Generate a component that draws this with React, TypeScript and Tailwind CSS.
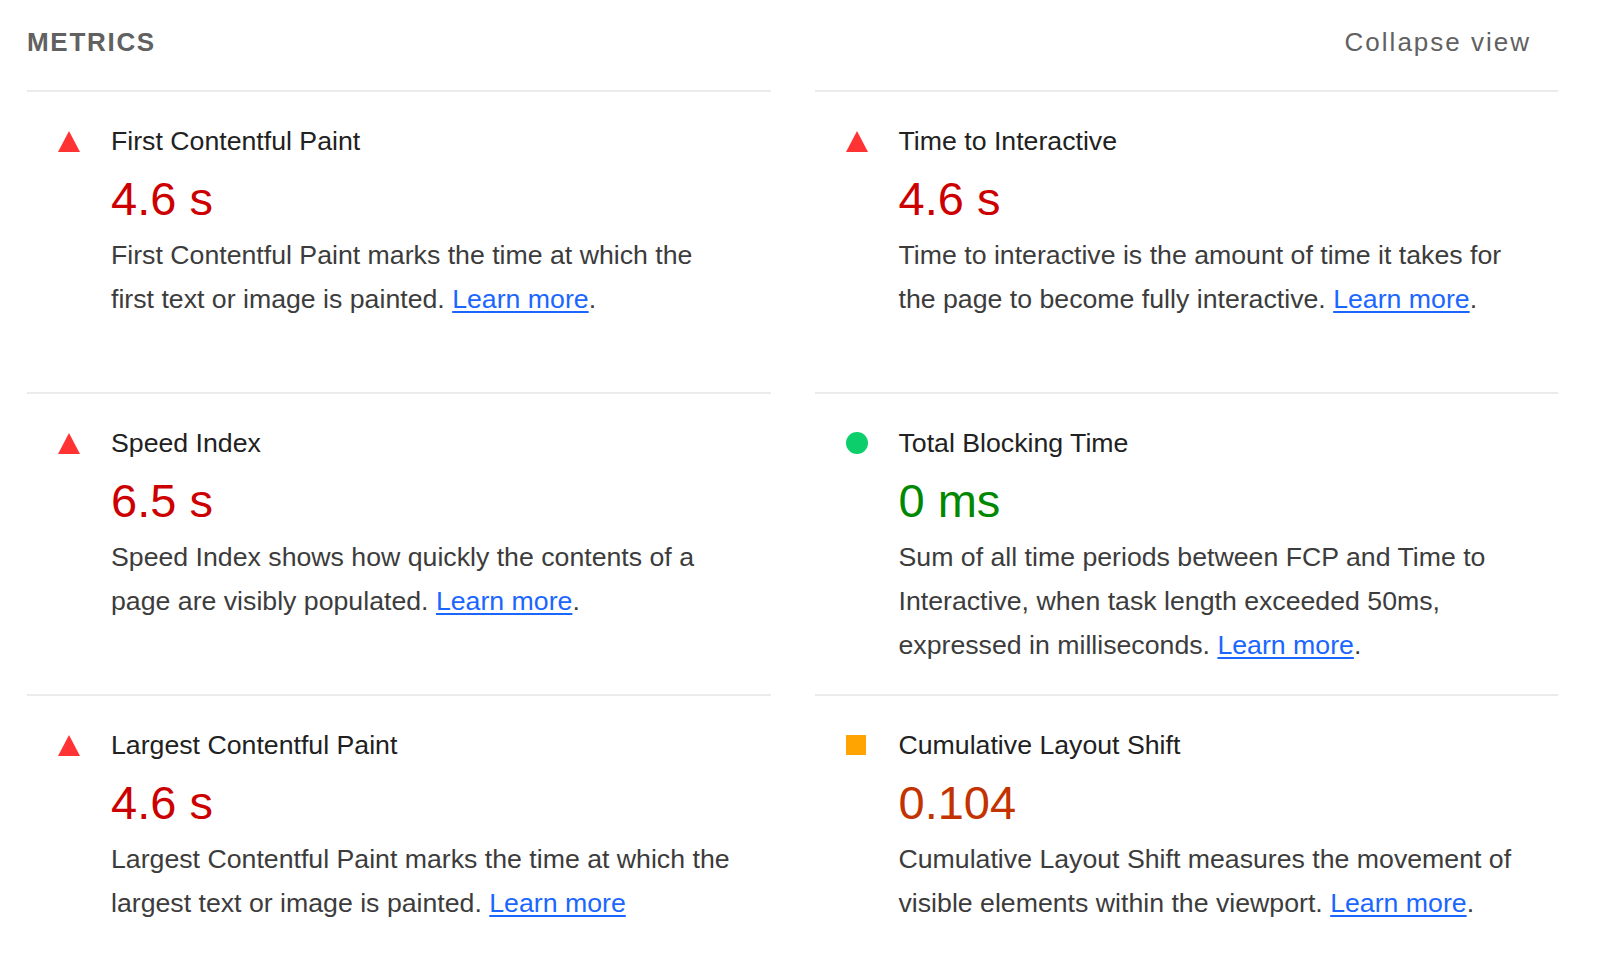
import React from 'react';

type Status = 'fail' | 'pass' | 'average';

interface Metric {
  title: string;
  value: string;
  status: Status;
  description: string;
  period?: boolean;
}

const metrics: Metric[] = [
  {
    title: 'First Contentful Paint',
    value: '4.6 s',
    status: 'fail',
    description: 'First Contentful Paint marks the time at which the first text or image is painted.',
  },
  {
    title: 'Time to Interactive',
    value: '4.6 s',
    status: 'fail',
    description: 'Time to interactive is the amount of time it takes for the page to become fully interactive.',
  },
  {
    title: 'Speed Index',
    value: '6.5 s',
    status: 'fail',
    description: 'Speed Index shows how quickly the contents of a page are visibly populated.',
  },
  {
    title: 'Total Blocking Time',
    value: '0 ms',
    status: 'pass',
    description:
      'Sum of all time periods between FCP and Time to Interactive, when task length exceeded 50ms, expressed in milliseconds.',
  },
  {
    title: 'Largest Contentful Paint',
    value: '4.6 s',
    status: 'fail',
    description: 'Largest Contentful Paint marks the time at which the largest text or image is painted.',
    period: false,
  },
  {
    title: 'Cumulative Layout Shift',
    value: '0.104',
    status: 'average',
    description: 'Cumulative Layout Shift measures the movement of visible elements within the viewport.',
  },
];

const valueColor: Record<Status, string> = {
  fail: 'text-[#cc0000]',
  pass: 'text-[#008800]',
  average: 'text-[#c33300]',
};

const StatusIcon: React.FC<{ status: Status }> = ({ status }) => {
  if (status === 'pass') {
    return <div className="w-[22px] h-[22px] rounded-full bg-[#0cce6b]" />;
  }
  if (status === 'average') {
    return <div className="w-[20px] h-[20px] bg-[#ffa400]" />;
  }
  return (
    <svg width="22" height="21" viewBox="0 0 22 21">
      <polygon points="11,0 22,21 0,21" fill="#ff3333" />
    </svg>
  );
};

const MetricCard: React.FC<{ metric: Metric }> = ({ metric }) => (
  <div className="min-h-[302px] border-t-2 border-[#ebebeb] pt-[33px] pb-[27px] flex">
    <div className="w-[84px] pl-[31px] shrink-0 h-[32px] flex items-center">
      <StatusIcon status={metric.status} />
    </div>
    <div className="flex flex-col">
      <div className="text-[26.7px] leading-[32px] text-[#212121]">{metric.title}</div>
      <div className={`text-[47px] leading-[56px] mt-[14px] ${valueColor[metric.status]}`}>{metric.value}</div>
      <div className="text-[26.7px] leading-[44px] text-[#3c3c3c] mt-[6px] max-w-[626px]">
        {metric.description}{' '}
        <a href="#" className="text-[#1a66ff] underline underline-offset-[3px]">
          Learn more
        </a>
        {metric.period === false ? '' : '.'}
      </div>
    </div>
  </div>
);

export default function App() {
  return (
    <div className="min-h-screen bg-white pl-[27px] pr-[42px] font-['Liberation_Sans',Arial,sans-serif]">
      <div className="h-[90px] pb-[6px] flex items-center justify-between">
        <div className="text-[26px] font-bold tracking-[1.7px] text-[#616161]">METRICS</div>
        <div className="text-[26px] tracking-[2px] text-[#616161] pr-[27px]">Collapse view</div>
      </div>
      <div className="grid grid-cols-2 gap-x-[44px]">
        {metrics.map((m) => (
          <MetricCard key={m.title} metric={m} />
        ))}
      </div>
    </div>
  );
}
